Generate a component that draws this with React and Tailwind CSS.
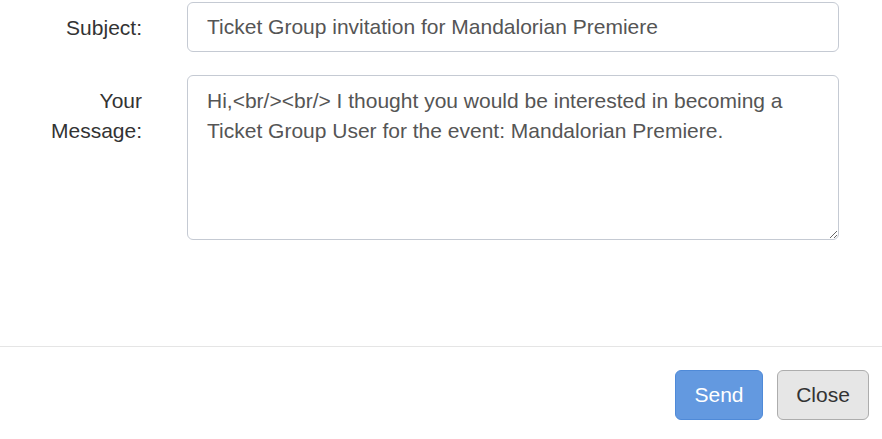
import React, { useState } from "react";

const App = () => {
    const [subject, setSubject] = useState("Ticket Group invitation for Mandalorian Premiere");
    const [message, setMessage] = useState(
        "Hi,<br/><br/> I thought you would be interested in becoming a Ticket Group User for the event: Mandalorian Premiere."
    );

    return (
        <div className="w-[882px] h-[439px] bg-white overflow-hidden font-['Liberation_Sans',Arial,sans-serif] text-[21px] leading-[30px] text-[#333]">
            <div className="pt-[2px] pr-[43px] h-[346px]">
                {/* SUBJECT */}
                <div className="flex items-start">
                    <label className="w-[142px] text-right pt-[11px]">Subject:</label>
                    <div className="ml-[45px] flex-1">
                        <input
                            type="text"
                            value={subject}
                            onChange={(e) => setSubject(e.target.value)}
                            className="w-full h-[50px] px-[19px] border border-[#c5cad3] rounded-[6px] text-[#555] outline-none"
                        />
                    </div>
                </div>

                {/* MESSAGE */}
                <div className="flex items-start mt-[23px]">
                    <label className="w-[142px] text-right pt-[11px]">
                        Your
                        <br />
                        Message:
                    </label>
                    <div className="ml-[45px] flex-1">
                        <textarea
                            value={message}
                            onChange={(e) => setMessage(e.target.value)}
                            className="block w-full h-[165px] px-[19px] py-[10px] border border-[#c5cad3] rounded-[6px] text-[#555] outline-none resize-y"
                        />
                    </div>
                </div>
            </div>

            {/* FOOTER */}
            <div className="border-t border-[#e5e5e5] pt-[23px] pr-[13px] flex justify-end gap-[14px]">
                <button className="h-[50px] w-[88px] bg-[#6399e0] border border-[#4f8ad8] text-white rounded-[6px] text-[21px]">
                    Send
                </button>
                <button className="h-[50px] w-[92px] bg-[#e6e6e6] border border-[#adadad] text-[#333] rounded-[6px] text-[21px]">
                    Close
                </button>
            </div>
        </div>
    );
};

export default App;
